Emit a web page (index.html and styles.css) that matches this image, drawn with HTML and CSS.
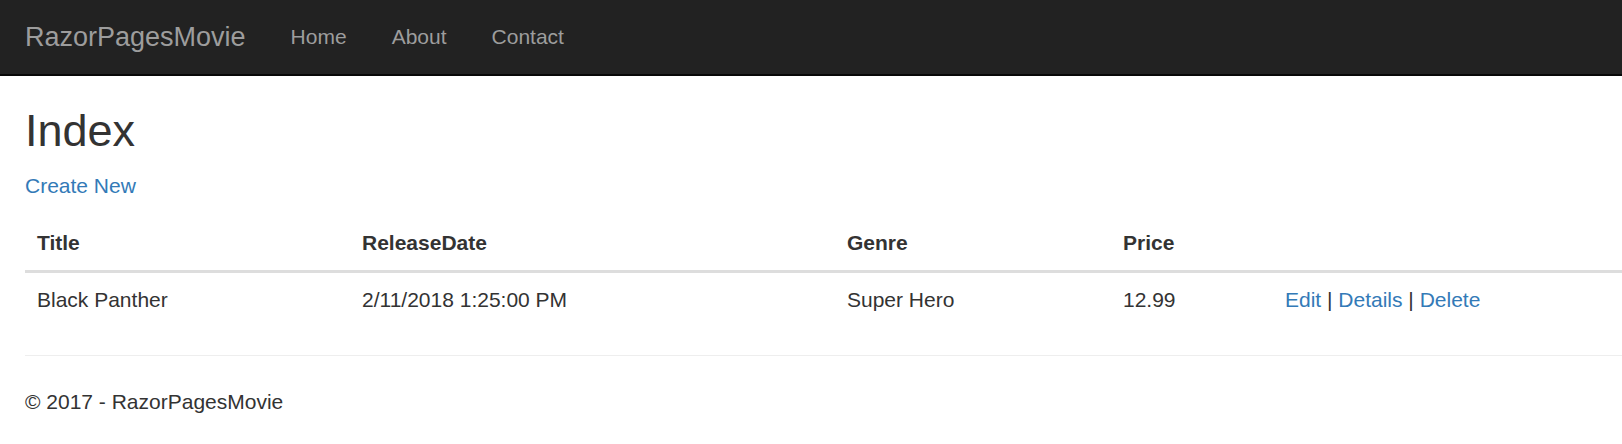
FILE: index.html
```html
<!DOCTYPE html>
<html>
<head>
<meta charset="utf-8">
<title>Index - RazorPagesMovie</title>
<link rel="stylesheet" href="styles.css">
</head>
<body>
<nav class="navbar">
  <div class="navbar-inner">
    <a class="brand" href="#">RazorPagesMovie</a>
    <ul class="nav">
      <li><a href="#">Home</a></li>
      <li><a href="#">About</a></li>
      <li><a href="#">Contact</a></li>
    </ul>
  </div>
</nav>
<div class="body-content">
  <h2 class="title">Index</h2>
  <p class="create"><a href="#">Create New</a></p>
  <table class="table">
    <thead>
      <tr>
        <th class="c-title">Title</th>
        <th class="c-date">ReleaseDate</th>
        <th class="c-genre">Genre</th>
        <th class="c-price">Price</th>
        <th class="c-actions"></th>
      </tr>
    </thead>
    <tbody>
      <tr>
        <td>Black Panther</td>
        <td>2/11/2018 1:25:00 PM</td>
        <td>Super Hero</td>
        <td>12.99</td>
        <td><a href="#">Edit</a> | <a href="#">Details</a> | <a href="#">Delete</a></td>
      </tr>
    </tbody>
  </table>
  <hr class="rule">
  <footer class="footer">
    <p>&copy; 2017 - RazorPagesMovie</p>
  </footer>
</div>
</body>
</html>
```

FILE: styles.css
```css
html, body {
  margin: 0;
  padding: 0;
}
body {
  font-family: "Liberation Sans", Arial, Helvetica, sans-serif;
  font-size: 21px;
  line-height: 30px;
  color: #333;
  background: #fff;
}
a {
  color: #337ab7;
  text-decoration: none;
}
.navbar {
  background: #222;
  border-bottom: 2px solid #080808;
  height: 74px;
}
.navbar-inner {
  display: flex;
  align-items: stretch;
  padding-left: 25px;
  height: 74px;
}
.brand {
  color: #9d9d9d;
  font-size: 27px;
  line-height: 30px;
  padding: 22px 22.5px 22px 0;
}
.nav {
  display: flex;
  list-style: none;
  margin: 0;
  padding: 0;
}
.nav li a {
  display: block;
  color: #9d9d9d;
  padding: 22px 22.5px;
  line-height: 30px;
}
.body-content {
  padding-left: 25px;
}
.title {
  font-size: 45px;
  font-weight: 500;
  line-height: 1.1;
  margin: 30px 0 15px;
}
.create {
  margin: 0 0 15px;
}
.table {
  width: 100%;
  border-collapse: collapse;
  border-spacing: 0;
  margin-bottom: 28px;
}
.table th {
  text-align: left;
  font-weight: bold;
  padding: 12px;
  line-height: 30px;
  border-bottom: 3px solid #ddd;
  vertical-align: bottom;
}
.table td {
  padding: 12px;
  line-height: 30px;
  vertical-align: top;
}
.c-title { width: 301px; }
.c-date { width: 461px; }
.c-genre { width: 252px; }
.c-price { width: 138px; }
.rule {
  border: 0;
  border-top: 1px solid #eee;
  margin: 28px 0 31px;
  height: 0;
}
.footer p {
  margin: 0 0 15px;
}
```
